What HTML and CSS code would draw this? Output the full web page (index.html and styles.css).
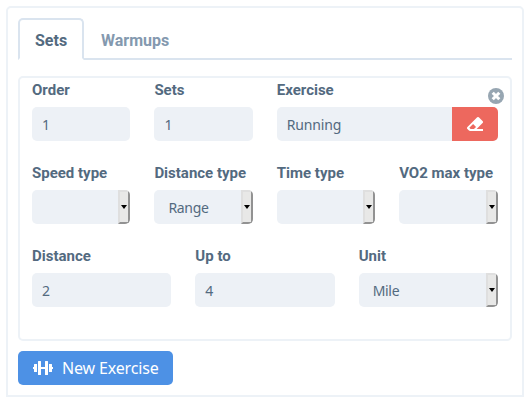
FILE: index.html
```html
<!DOCTYPE html>
<html lang="en">
<head>
<meta charset="utf-8">
<title>Workout sets</title>
<link rel="stylesheet" href="styles.css">
</head>
<body>
<main class="panel">
  <nav class="tabs">
    <a class="tab active">Sets</a>
    <a class="tab">Warmups</a>
    <span class="tab-line"></span>
  </nav>
  <section class="card">
    <svg class="close" viewBox="0 0 16 16"><circle cx="8" cy="8" r="8" fill="#97a6b2"/><path d="M4.700 4.700l6.600 6.600M11.300 4.700l-6.600 6.600" stroke="#fff" stroke-width="3"/></svg>
    <div class="row four">
      <div class="field"><label>Order</label><div class="control">1</div></div>
      <div class="field"><label>Sets</label><div class="control">1</div></div>
      <div class="field wide"><label>Exercise</label>
        <div class="control group">Running
          <button class="erase" aria-label="Clear"><svg width="16" height="14" viewBox="0 0 512 448"><path fill="#fff" d="M498 194c19-19 19-49 0-68L386 14c-19-19-49-19-68 0L14 318c-19 19-19 49 0 68l48 48c9 9 21 14 34 14h404c7 0 12-5 12-12v-40c0-7-5-12-12-12H308zM195 223l94 94-67 67H115l-42-38z" fill-rule="evenodd"/></svg></button>
        </div>
      </div>
    </div>
    <div class="row four">
      <div class="field"><label>Speed type</label><div class="control select"><span class="arrow"></span></div></div>
      <div class="field"><label>Distance type</label><div class="control select">Range<span class="arrow"></span></div></div>
      <div class="field"><label>Time type</label><div class="control select"><span class="arrow"></span></div></div>
      <div class="field"><label>VO2 max type</label><div class="control select"><span class="arrow"></span></div></div>
    </div>
    <div class="row three">
      <div class="field"><label>Distance</label><div class="control">2</div></div>
      <div class="field"><label>Up to</label><div class="control">4</div></div>
      <div class="field"><label>Unit</label><div class="control select">Mile<span class="arrow"></span></div></div>
    </div>
  </section>
  <button class="new"><svg width="20" height="14" viewBox="0 0 20 14"><path fill="#fff" d="M0 6h1V3.5Q1 3 1.500 3H4v8H1.500Q1 11 1 10.500V8H0zM5 .5Q5 0 5.500 0H7.500Q8 0 8 .5V6h4V.5Q12 0 12.500 0H14.500Q15 0 15 .5v13q0 .5-.5.5h-2q-.5 0-.5-.5V8H8v5.500q0 .5-.5.5h-2q-.5 0-.5-.5zM16 3h2.500q.5 0 .5.500V6h1v2h-1v2.500q0 .5-.5.5H16z"/></svg><span>New Exercise</span></button>
</main>
</body>
</html>
```
FILE: styles.css
```css
* { box-sizing: border-box; }
body { margin: 0; padding: 6px; background: #fff; color: #536a7f; }
button { border: 0; padding: 0; margin: 0; }
.panel {
  width: 518px; height: 391px; padding: 10px;
  border: 2px solid #edf2f7; border-radius: 5px 5px 0 0;
}
.tabs { display: flex; height: 42px; font: bold 16px/42px Roboto, sans-serif; }
.tab { padding: 2px 15px 0 17px; border-bottom: 2px solid #dae4ef; color: #8499af; }
.tab.active {
  width: 66px; padding: 0 0 0 15px; color: #536a7f;
  border: 2px solid #dae4ef; border-bottom-color: #fff; border-radius: 5px 5px 0 0;
}
.tab-line { flex: 1; border-bottom: 2px solid #dae4ef; }
.card {
  position: relative; height: 265px; margin-top: 16px; padding: 2px 12px;
  border: 2px solid #edf2f7; border-radius: 5px;
}
.close { position: absolute; top: 10px; right: 6px; width: 16px; height: 16px; }
.row { display: grid; column-gap: 24px; height: 83px; }
.four { width: 465.5px; grid-template-columns: repeat(4, minmax(0, 1fr)); }
.three { grid-template-columns: repeat(3, minmax(0, 1fr)); }
.wide { grid-column: span 2; }
label { display: block; height: 27px; font: bold 15px/20px Roboto, sans-serif; white-space: nowrap; }
.control {
  display: flex; align-items: center; height: 34px; padding: 2px 0 0 10px;
  background: #edf1f6; border-radius: 5px; overflow: hidden;
  font: 14px/20px "Noto Sans", sans-serif; letter-spacing: -0.3px;
}
.group, .select { justify-content: space-between; }
.select { padding-left: 14px; }
.group { letter-spacing: -0.15px; }
.erase {
  display: flex; align-items: center; justify-content: center;
  width: 46px; height: 34px; margin-top: -2px; background: #ed685e;
}
.arrow {
  display: flex; align-items: center; justify-content: center;
  width: 12px; height: 34px; margin: -2px 0 0 auto;
  background: #e8e8e7; border: 2px solid; border-color: #dfdfdf #929292 #929292 #dfdfdf;
}
.arrow::before { content: ""; border: 3.500px solid transparent; border-width: 4px 3px 0; border-top-color: #000; }
.new {
  display: flex; align-items: center; width: 155px; height: 34px; margin-top: 10px;
  padding-left: 15px; gap: 9px; background: #4d91e5; border-radius: 5px; color: #fff;
  font: 16px/20px "Noto Sans", sans-serif; letter-spacing: -0.15px;
}
```
